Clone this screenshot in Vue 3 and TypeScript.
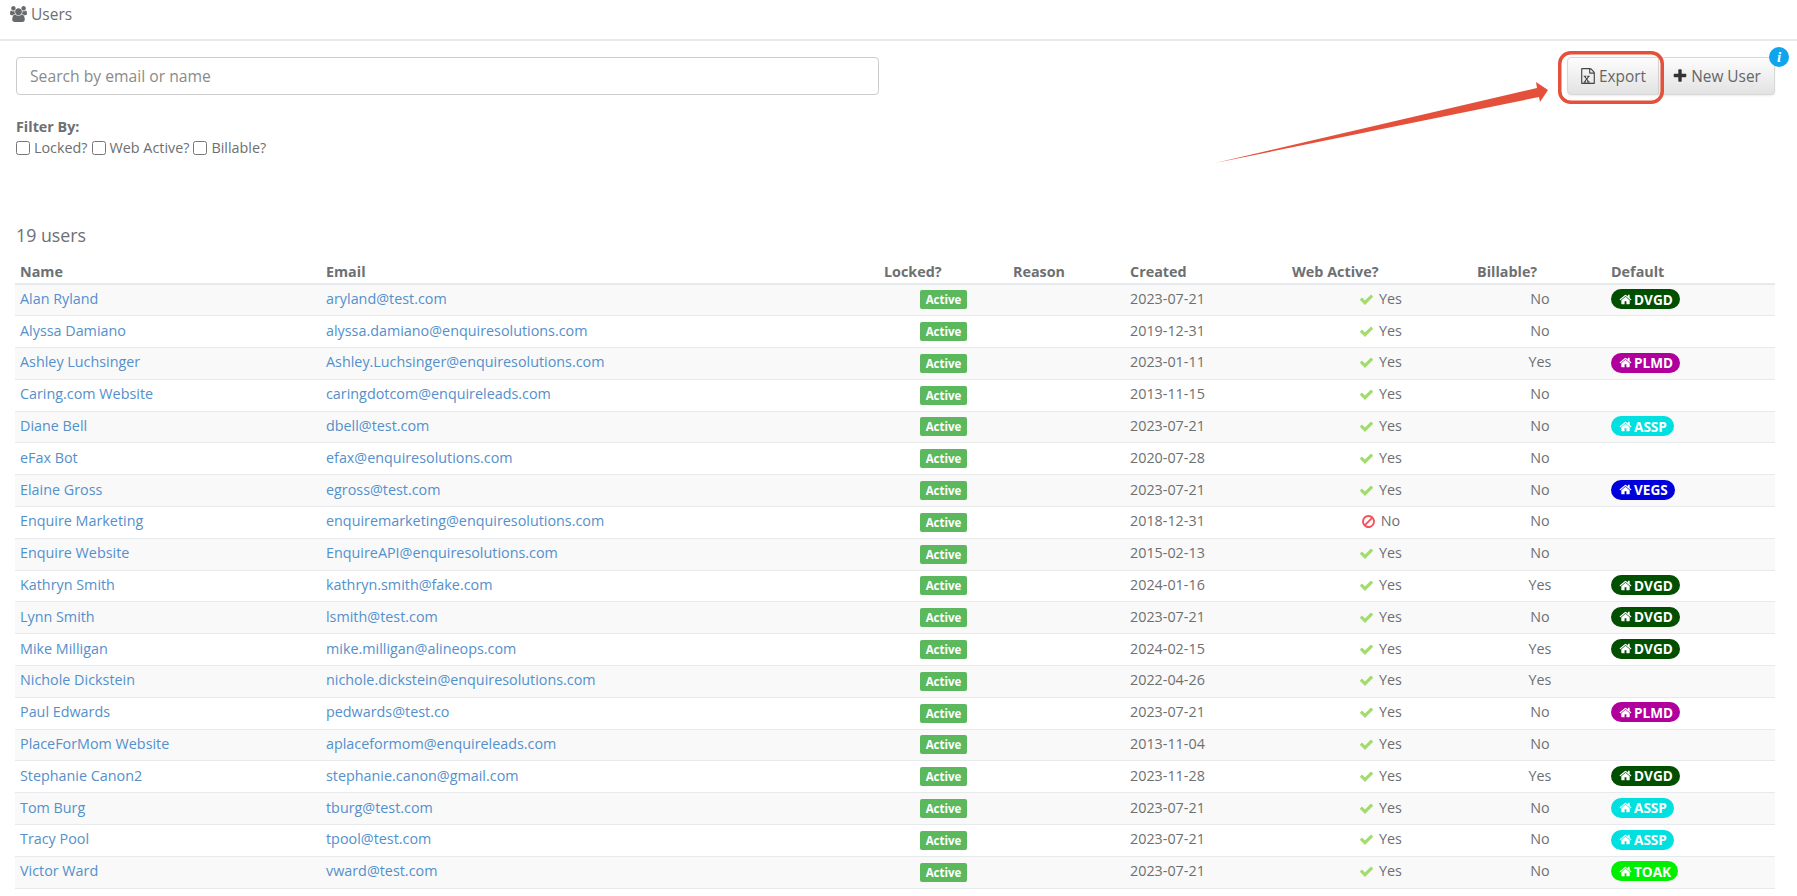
<script setup lang="ts">
interface User {
  name: string
  email: string
  created: string
  web: boolean
  billable: boolean
  site?: string
}
const users: User[] = [
  { name: 'Alan Ryland', email: 'aryland@test.com', created: '2023-07-21', web: true, billable: false, site: 'DVGD' },
  { name: 'Alyssa Damiano', email: 'alyssa.damiano@enquiresolutions.com', created: '2019-12-31', web: true, billable: false },
  { name: 'Ashley Luchsinger', email: 'Ashley.Luchsinger@enquiresolutions.com', created: '2023-01-11', web: true, billable: true, site: 'PLMD' },
  { name: 'Caring.com Website', email: 'caringdotcom@enquireleads.com', created: '2013-11-15', web: true, billable: false },
  { name: 'Diane Bell', email: 'dbell@test.com', created: '2023-07-21', web: true, billable: false, site: 'ASSP' },
  { name: 'eFax Bot', email: 'efax@enquiresolutions.com', created: '2020-07-28', web: true, billable: false },
  { name: 'Elaine Gross', email: 'egross@test.com', created: '2023-07-21', web: true, billable: false, site: 'VEGS' },
  { name: 'Enquire Marketing', email: 'enquiremarketing@enquiresolutions.com', created: '2018-12-31', web: false, billable: false },
  { name: 'Enquire Website', email: 'EnquireAPI@enquiresolutions.com', created: '2015-02-13', web: true, billable: false },
  { name: 'Kathryn Smith', email: 'kathryn.smith@fake.com', created: '2024-01-16', web: true, billable: true, site: 'DVGD' },
  { name: 'Lynn Smith', email: 'lsmith@test.com', created: '2023-07-21', web: true, billable: false, site: 'DVGD' },
  { name: 'Mike Milligan', email: 'mike.milligan@alineops.com', created: '2024-02-15', web: true, billable: true, site: 'DVGD' },
  { name: 'Nichole Dickstein', email: 'nichole.dickstein@enquiresolutions.com', created: '2022-04-26', web: true, billable: true },
  { name: 'Paul Edwards', email: 'pedwards@test.co', created: '2023-07-21', web: true, billable: false, site: 'PLMD' },
  { name: 'PlaceForMom Website', email: 'aplaceformom@enquireleads.com', created: '2013-11-04', web: true, billable: false },
  { name: 'Stephanie Canon2', email: 'stephanie.canon@gmail.com', created: '2023-11-28', web: true, billable: true, site: 'DVGD' },
  { name: 'Tom Burg', email: 'tburg@test.com', created: '2023-07-21', web: true, billable: false, site: 'ASSP' },
  { name: 'Tracy Pool', email: 'tpool@test.com', created: '2023-07-21', web: true, billable: false, site: 'ASSP' },
  { name: 'Victor Ward', email: 'vward@test.com', created: '2023-07-21', web: true, billable: false, site: 'TOAK' },
]
const home = 'M1472 992v480q0 26-19 45t-45 19h-384v-384h-256v384h-384q-26 0-45-19t-19-45v-480q0-1 .5-3t.5-3l575-474 575 474q1 2 1 6zm223-69l-62 74q-8 9-21 11h-3q-13 0-21-7l-692-577-692 577q-12 8-24 7-13-2-21-11l-62-74q-8-10-7-23.5t11-21.5l719-599q32-26 76-26t76 26l244 204v-195q0-14 9-23t23-9h192q14 0 23 9t9 23v408l219 182q10 8 11 21.5t-7 23.5z'
const check = 'M1671 566q0 40-28 68l-724 724-136 136q-28 28-68 28t-68-28l-136-136-362-362q-28-28-28-68t28-68l136-136q28-28 68-28t68 28l294 295 656-657q28-28 68-28t68 28l136 136q28 28 28 68z'
const ban = 'M1440 893q0-161-87-295l-754 753q137 89 297 89 111 0 211.5-43.5t173.5-116.5 116-174.5 43-212.5zm-999 299l755-754q-135-91-300-91-148 0-273 73t-198 199-73 274q0 162 89 299zm1223-299q0 157-61 300t-163.5 246-245 164-298.5 61-298.5-61-245-164-163.5-246-61-300 61-299.5 163.5-245.5 245-164 298.5-61 298.5 61 245 164 163.5 245.5 61 299.5z'
</script>

<template>
  <div class="page">
    <header class="topbar">
      <svg class="users-icon" viewBox="0 0 1920 1792"><path fill="currentColor" d="M593 896q-162 5-265 128h-134q-82 0-138-40.5t-56-118.5q0-353 124-353 6 0 43.5 21t97.5 42.5 119 21.5q67 0 133-23-5 37-5 66 0 139 81 256zm1071 637q0 120-73 189.5t-194 69.5h-874q-121 0-194-69.5t-73-189.5q0-53 3.5-103.5t14-109 26.5-108.5 43-97.5 62-81 85.5-53.5 111.5-20q10 0 43 21.5t73 48 107 48 135 21.5 135-21.5 107-48 73-48 43-21.5q61 0 111.5 20t85.5 53.5 62 81 43 97.5 26.5 108.5 14 109 3.5 103.5zm-1024-1277q0 106-75 181t-181 75-181-75-75-181 75-181 181-75 181 75 75 181zm704 384q0 159-112.5 271.5t-271.5 112.5-271.5-112.5-112.5-271.5 112.5-271.5 271.5-112.5 271.5 112.5 112.5 271.5zm576 225q0 78-56 118.5t-138 40.5h-134q-103-123-265-128 81-117 81-256 0-29-5-66 66 23 133 23 59 0 119-21.5t97.5-42.5 43.5-21q124 0 124 353zm-128-609q0 106-75 181t-181 75-181-75-75-181 75-181 181-75 181 75 75 181z"/></svg>
      <span>Users</span>
    </header>

    <main class="content">
      <div class="toolbar">
        <input class="search" type="text" placeholder="Search by email or name" />
        <div class="actions">
          <button class="btn" type="button">
            <svg class="btn-icon" viewBox="0 0 1792 1792"><path fill="currentColor" d="M1596 380q28 28 48 76t20 88v1152q0 40-28 68t-68 28h-1344q-40 0-68-28t-28-68v-1600q0-40 28-68t68-28h896q40 0 88 20t76 48zm-444-244v376h376q-10-29-22-41l-313-313q-12-12-41-22zm384 1528v-1024h-416q-40 0-68-28t-28-68v-416h-768v1536h1280zm-1128-141v106h281v-106h-75l103-161q5-7 10-16.5t7.5-13.5 3.5-4h2q1 4 5 10 2 4 4.5 7.5t6 8 6.5 8.5l107 161h-76v106h291v-106h-68l-192-273 195-282h67v-107h-279v107h74l-103 159q-4 7-10 16.5t-9 13.5l-2 3h-2q-1-4-5-10-6-11-17-23l-106-159h76v-107h-290v107h68l189 272-194 283h-68z"/></svg>
            Export
          </button>
          <button class="btn new" type="button">
            <svg class="btn-icon" viewBox="0 0 1792 1792"><path fill="#333" d="M1600 736v192q0 40-28 68t-68 28h-416v416q0 40-28 68t-68 28h-192q-40 0-68-28t-28-68v-416h-416q-40 0-68-28t-28-68v-192q0-40 28-68t68-28h416v-416q0-40 28-68t68-28h192q40 0 68 28t28 68v416h416q40 0 68 28t28 68z"/></svg>
            New User
          </button>
          <span class="info">i</span>
        </div>
      </div>

      <div class="filter">
        <div class="filter-title">Filter By:</div>
        <div class="filter-row">
          <label><input type="checkbox" /> Locked?</label>
          <label><input type="checkbox" /> Web Active?</label>
          <label><input type="checkbox" /> Billable?</label>
        </div>
      </div>

      <h2 class="count">19 users</h2>

      <table class="users">
        <colgroup>
          <col class="col-name" />
          <col class="col-email" />
          <col class="col-locked" />
          <col class="col-reason" />
          <col class="col-created" />
          <col class="col-web" />
          <col class="col-billable" />
          <col />
        </colgroup>
        <thead>
          <tr>
            <th>Name</th><th>Email</th><th>Locked?</th><th>Reason</th>
            <th>Created</th><th>Web Active?</th><th>Billable?</th><th>Default</th>
          </tr>
        </thead>
        <tbody>
          <tr v-for="u in users" :key="u.email">
            <td><a class="link">{{ u.name }}</a></td>
            <td><a class="link">{{ u.email }}</a></td>
            <td class="locked"><span class="active">Active</span></td>
            <td></td>
            <td>{{ u.created }}</td>
            <td class="center">
              <svg class="status" viewBox="0 0 1792 1792">
                <path :fill="u.web ? '#a2dc6c' : '#f5535b'" :d="u.web ? check : ban" />
              </svg>
              {{ u.web ? 'Yes' : 'No' }}
            </td>
            <td class="center">{{ u.billable ? 'Yes' : 'No' }}</td>
            <td>
              <span v-if="u.site" class="site" :class="'site-' + u.site">
                <svg class="home" viewBox="0 0 1792 1792"><path fill="currentColor" :d="home" /></svg>
                {{ u.site }}
              </span>
            </td>
          </tr>
        </tbody>
      </table>
    </main>

    <svg class="annotation" width="1797" height="896" viewBox="0 0 1797 896">
      <path d="M1215 163 L1537 88 L1536 82 L1548 90 L1540 102 L1539 97 Z" fill="#e4503a" />
      <rect x="1559.75" y="52.75" width="102.5" height="49.5" rx="11" fill="none" stroke="#e4503a" stroke-width="3.5" />
    </svg>
  </div>
</template>

<style>
html, body { margin: 0; background: #fff; }
</style>

<style scoped>
.page {
  position: relative;
  height: 896px;
  overflow: hidden;
  font-family: "Open Sans", sans-serif;
  font-size: 14.35px;
  color: #6d7072;
}
.topbar {
  display: flex;
  align-items: center;
  gap: 4px;
  height: 41px;
  padding: 0 0 11px 10px;
  border-bottom: 2px solid #e7eaec;
  box-sizing: border-box;
  font-size: 15.5px;
}
.users-icon { width: 17px; height: 16px; color: #676a6c; }
.content { padding: 16px 22px 0 15px; }
.toolbar { display: flex; justify-content: space-between; align-items: flex-start; }
.search {
  width: 863px;
  height: 38px;
  margin-left: 1px;
  padding: 0 13px;
  box-sizing: border-box;
  border: 1px solid #ccc;
  border-radius: 4px;
  font: 15.7px "Open Sans", sans-serif;
  color: #555;
  outline: none;
}
.search::placeholder { color: #8a8a8a; opacity: 1; }
.actions { position: relative; display: flex; }
.btn {
  display: flex;
  align-items: center;
  justify-content: center;
  gap: 3px;
  width: 92px;
  height: 38px;
  padding: 0;
  font: 15.4px "Open Sans", sans-serif;
  color: #666;
  background: linear-gradient(#fdfdfd, #e2e2e2);
  border: 1px solid #d8d8d8;
  border-radius: 4px 0 0 4px;
  box-shadow: 0 1px 2px rgba(0, 0, 0, .08);
}
.btn.new { width: 116px; border-left: 0; border-radius: 0 4px 4px 0; }
.btn-icon { width: 16px; height: 16px; color: #444; }
.info {
  position: absolute;
  left: 202px;
  top: -10px;
  width: 20px;
  height: 20px;
  border-radius: 50%;
  background: #0ea5ec;
  color: #fff;
  text-align: center;
  font: italic bold 15px/20px "Liberation Serif", serif;
}
.filter { margin-top: 22px; margin-left: 1px; }
.filter-title { font-weight: 700; line-height: 19px; }
.filter-row { display: flex; gap: 4px; line-height: 20px; margin-top: 2px; }
.filter-row label { display: flex; align-items: center; gap: 4px; }
.filter-row input { margin: 0; width: 14px; height: 14px; }
.count {
  margin: 64px 0 0 1px;
  font-size: 17.8px;
  line-height: 26px;
  font-weight: 400;
}
.users {
  width: 1760px;
  margin-top: 12px;
  table-layout: fixed;
  border-collapse: collapse;
}
.col-name { width: 307px; }
.col-email { width: 558px; }
.col-locked { width: 129px; }
.col-reason { width: 117px; }
.col-created { width: 162px; }
.col-web { width: 185px; }
.col-billable { width: 134px; }
th {
  height: 24px;
  padding: 0 4px;
  box-sizing: border-box;
  text-align: left;
  font-weight: 700;
  border-bottom: 2px solid #e7eaec;
  white-space: nowrap;
}
td {
  height: 31.8px;
  padding: 0 4px 3px;
  box-sizing: border-box;
  border-bottom: 1px solid #e7eaec;
  white-space: nowrap;
  vertical-align: middle;
}
th:first-child, td:first-child { padding-left: 5px; }
tbody tr:nth-child(odd) { background: #f9f9f9; }
.link { color: #5490cc; }
td.locked { text-align: center; padding-right: 6px; padding-bottom: 2px; }
.center { text-align: center; }
.active {
  display: inline-block;
  width: 47px;
  height: 19px;
  line-height: 19px;
  text-align: center;
  background: #5cb85c;
  color: #fff;
  font-size: 11.5px;
  font-weight: 700;
  border-radius: 2px;
  vertical-align: middle;
}
.status { width: 15px; height: 15px; vertical-align: -3px; margin-right: 1px; }
.site {
  display: inline-flex;
  align-items: center;
  gap: 2px;
  height: 20px;
  padding: 0 7px 0 8px;
  border-radius: 10px;
  color: #fff;
  font-size: 13.6px;
  font-weight: 700;
  vertical-align: middle;
}
.home { width: 13px; height: 13px; }
.site-DVGD { background: #014f01; }
.site-PLMD { background: #b0009b; }
.site-ASSP { background: #00e0e0; }
.site-VEGS { background: #0000dd; }
.site-TOAK { background: #00ee00; }
.annotation { position: absolute; left: 0; top: 0; pointer-events: none; }
</style>
